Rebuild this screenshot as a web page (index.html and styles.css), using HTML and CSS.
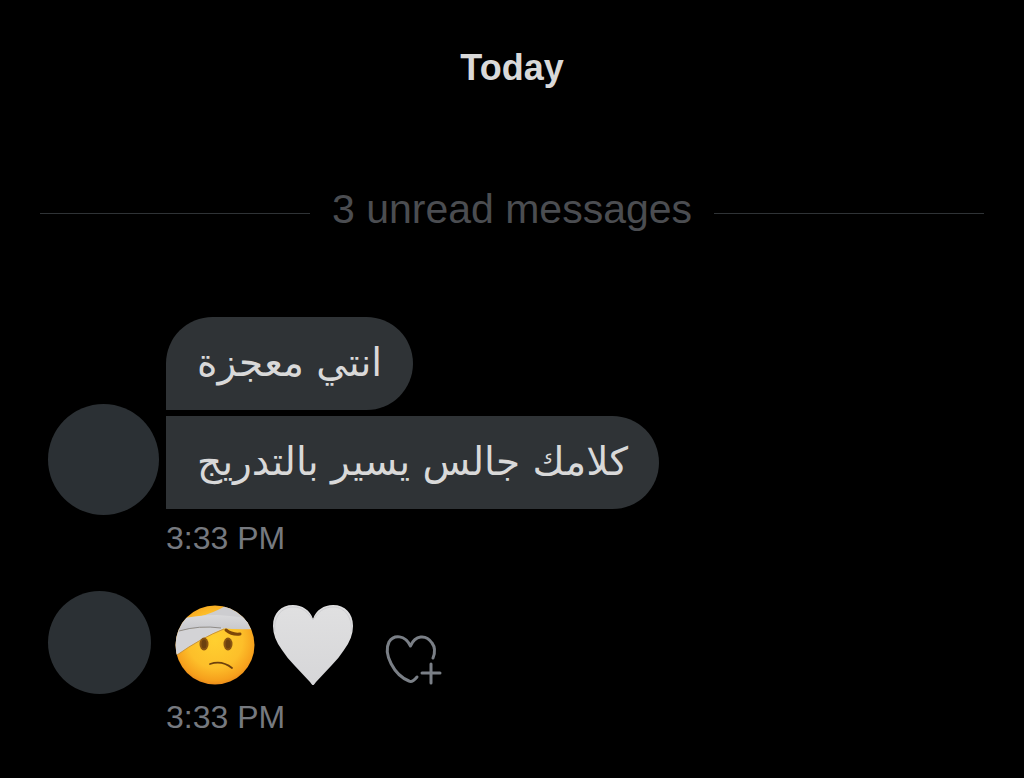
FILE: index.html
```html
<!DOCTYPE html>
<html lang="en">
<head>
  <meta charset="utf-8">
  <meta name="viewport" content="width=device-width, initial-scale=1.0">
  <title>Messages</title>
  <link rel="stylesheet" href="styles.css">
</head>
<body>
  <main class="chat">
    <h1 class="day">Today</h1>

    <div class="unread">3 unread messages</div>

    <!-- Text messages -->
    <section class="group">
      <div class="row">
        <div class="avatar"></div>
        <div class="bubbles">
          <p class="bubble first" lang="ar" dir="rtl">انتي معجزة</p>
          <p class="bubble" lang="ar" dir="rtl">كلامك جالس يسير بالتدريج</p>
        </div>
      </div>
      <time class="time">3:33 PM</time>
    </section>

    <!-- Emoji message -->
    <section class="group">
      <div class="row">
        <div class="avatar small"></div>
        <div class="emojis">
          <svg class="emoji" viewBox="0 0 80 80" role="img" aria-label="Face with head bandage">
            <defs>
              <radialGradient id="skin" cx="50%" cy="44%" r="58%">
                <stop offset="0" stop-color="#ffd030"/>
                <stop offset="0.6" stop-color="#fdbf2a"/>
                <stop offset="0.88" stop-color="#f6a01c"/>
                <stop offset="1" stop-color="#e8851a"/>
              </radialGradient>
              <linearGradient id="band" x1="0" y1="0" x2="0" y2="1">
                <stop offset="0" stop-color="#d9d9db"/>
                <stop offset="1" stop-color="#c6c6ca"/>
              </linearGradient>
              <clipPath id="head"><circle cx="40" cy="40" r="39.5"/></clipPath>
            </defs>
            <circle cx="40" cy="40" r="39.5" fill="url(#skin)"/>
            <g clip-path="url(#head)">
              <path d="M23 12Q39 8 52 0L80 8V20Q50 12 23 12Z" fill="#cdcdd0"/>
              <path d="M0 27Q26 20 50 23Q24 34 2 50L-2 50Z" fill="#d3d3d6"/>
              <path d="M0 15Q22 10 42 10Q62 11 80 15V24Q62 25 46 23Q22 21 0 27Z" fill="url(#band)"/>
              <path d="M4 26Q24 20 46 23" fill="none" stroke="#8f8c89" stroke-width="1"/>
              <path d="M2 50Q26 33 49 24" fill="none" stroke="#c9953c" stroke-width="1"/>
            </g>
            <ellipse cx="29" cy="39" rx="4.5" ry="6.5" fill="#8a5512"/>
            <ellipse cx="29" cy="39" rx="2.5" ry="4.5" fill="#6b400f"/>
            <ellipse cx="53" cy="39" rx="4.5" ry="6.5" fill="#8a5512"/>
            <ellipse cx="53" cy="39" rx="2.5" ry="4.5" fill="#6b400f"/>
            <path d="M51 25Q57 30 65 29" fill="none" stroke="#7d4609" stroke-width="3" stroke-linecap="round"/>
            <path d="M35 59Q47 55 57 63" fill="none" stroke="#6e410d" stroke-width="1.8" stroke-linecap="round"/>
          </svg>
          <svg class="emoji" viewBox="0 0 80 80" role="img" aria-label="White heart">
            <defs>
              <linearGradient id="white" x1="0" y1="0" x2="0" y2="1">
                <stop offset="0" stop-color="#e0e0e1"/>
                <stop offset="1" stop-color="#d6d6d8"/>
              </linearGradient>
            </defs>
            <path d="M40 80.500Q39 80 37 77L22 61Q14 53 9 45Q0 33 0 21C0 8 8 0 20 0C29 0 37 5 40 14C43 5 51 0 60 0C72 0 80 8 80 21Q80 33 71 45Q66 53 58 61L43 77Q41 80 40 80.500Z" fill="url(#white)"/>
            <path d="M2 27C0 13 8 2 20 2C29 2 35 7 40 15C45 7 51 2 60 2C72 2 80 13 78 27" fill="none" stroke="#cfcfd2" stroke-width="1"/>
          </svg>
        </div>
        <button class="react" type="button" aria-label="Add reaction">
          <svg class="react-icon" viewBox="0 0 56 50" aria-hidden="true">
            <path d="M48 23C50 18 50 12 47 8C41-1 30 0 25.500 11C20 0 9-1 4 7C-2 19 9 40 24 46Q27 48 32 42" fill="none" stroke="#7a7f86" stroke-width="3" stroke-linecap="round" stroke-linejoin="round"/>
            <path d="M46 29V48M37 38H55" fill="none" stroke="#7a7f86" stroke-width="3" stroke-linecap="round"/>
          </svg>
        </button>
      </div>
      <time class="time">3:33 PM</time>
    </section>
  </main>
</body>
</html>
```
FILE: styles.css
```css
* {
  box-sizing: border-box;
}

body {
  margin: 0;
  background-color: #000;
  color: #d9d9d9;
  font-family: "Liberation Sans", Arial, sans-serif;
}

.chat {
  padding: 44px 40px 38px;
}

.day {
  margin: 0;
  font-size: 36px;
  line-height: 48px;
  text-align: center;
}

/* Divider with a line on each side of the label */
.unread {
  display: flex;
  align-items: center;
  gap: 22px;
  margin: 91px 0 82px;
  color: #4b4d51;
  font-size: 41px;
  line-height: 52px;
}

.unread::before,
.unread::after {
  content: "";
  flex: 1;
  height: 1px;
  margin-top: 8px;
  background-color: #2f3336;
}

.group {
  padding-left: 8px;
}

.group + .group {
  margin-top: 30px;
}

.row {
  display: flex;
  align-items: flex-end;
}

.avatar {
  flex: none;
  width: 111px;
  height: 111px;
  margin-right: 7px;
  border-radius: 50%;
  background-color: #2b3034;
}

.avatar.small {
  width: 103px;
  height: 103px;
  margin-right: 24px;
}

.bubbles {
  display: flex;
  flex-direction: column;
  align-items: flex-start;
  gap: 6px;
  padding-bottom: 6px;
}

.bubble {
  margin: 0;
  padding: 20px 31px 21px;
  border-radius: 0 47px 47px 0;
  background-color: #2f3336;
  font-family: "DejaVu Sans", sans-serif;
  font-size: 39px;
  line-height: 52px;
}

.bubble.first {
  border-top-left-radius: 47px;
}

.emojis {
  display: flex;
  gap: 18px;
  padding-bottom: 9px;
}

.emoji {
  display: block;
  width: 80px;
  height: 80px;
}

.react {
  margin: 0 0 9px 32px;
  padding: 0;
  border: 0;
  background: none;
  cursor: pointer;
}

.react-icon {
  display: block;
  width: 56px;
  height: 50px;
  overflow: visible;
}

.time {
  display: block;
  padding-left: 118px;
  color: #76797f;
  font-size: 32px;
  line-height: 46px;
}
```
